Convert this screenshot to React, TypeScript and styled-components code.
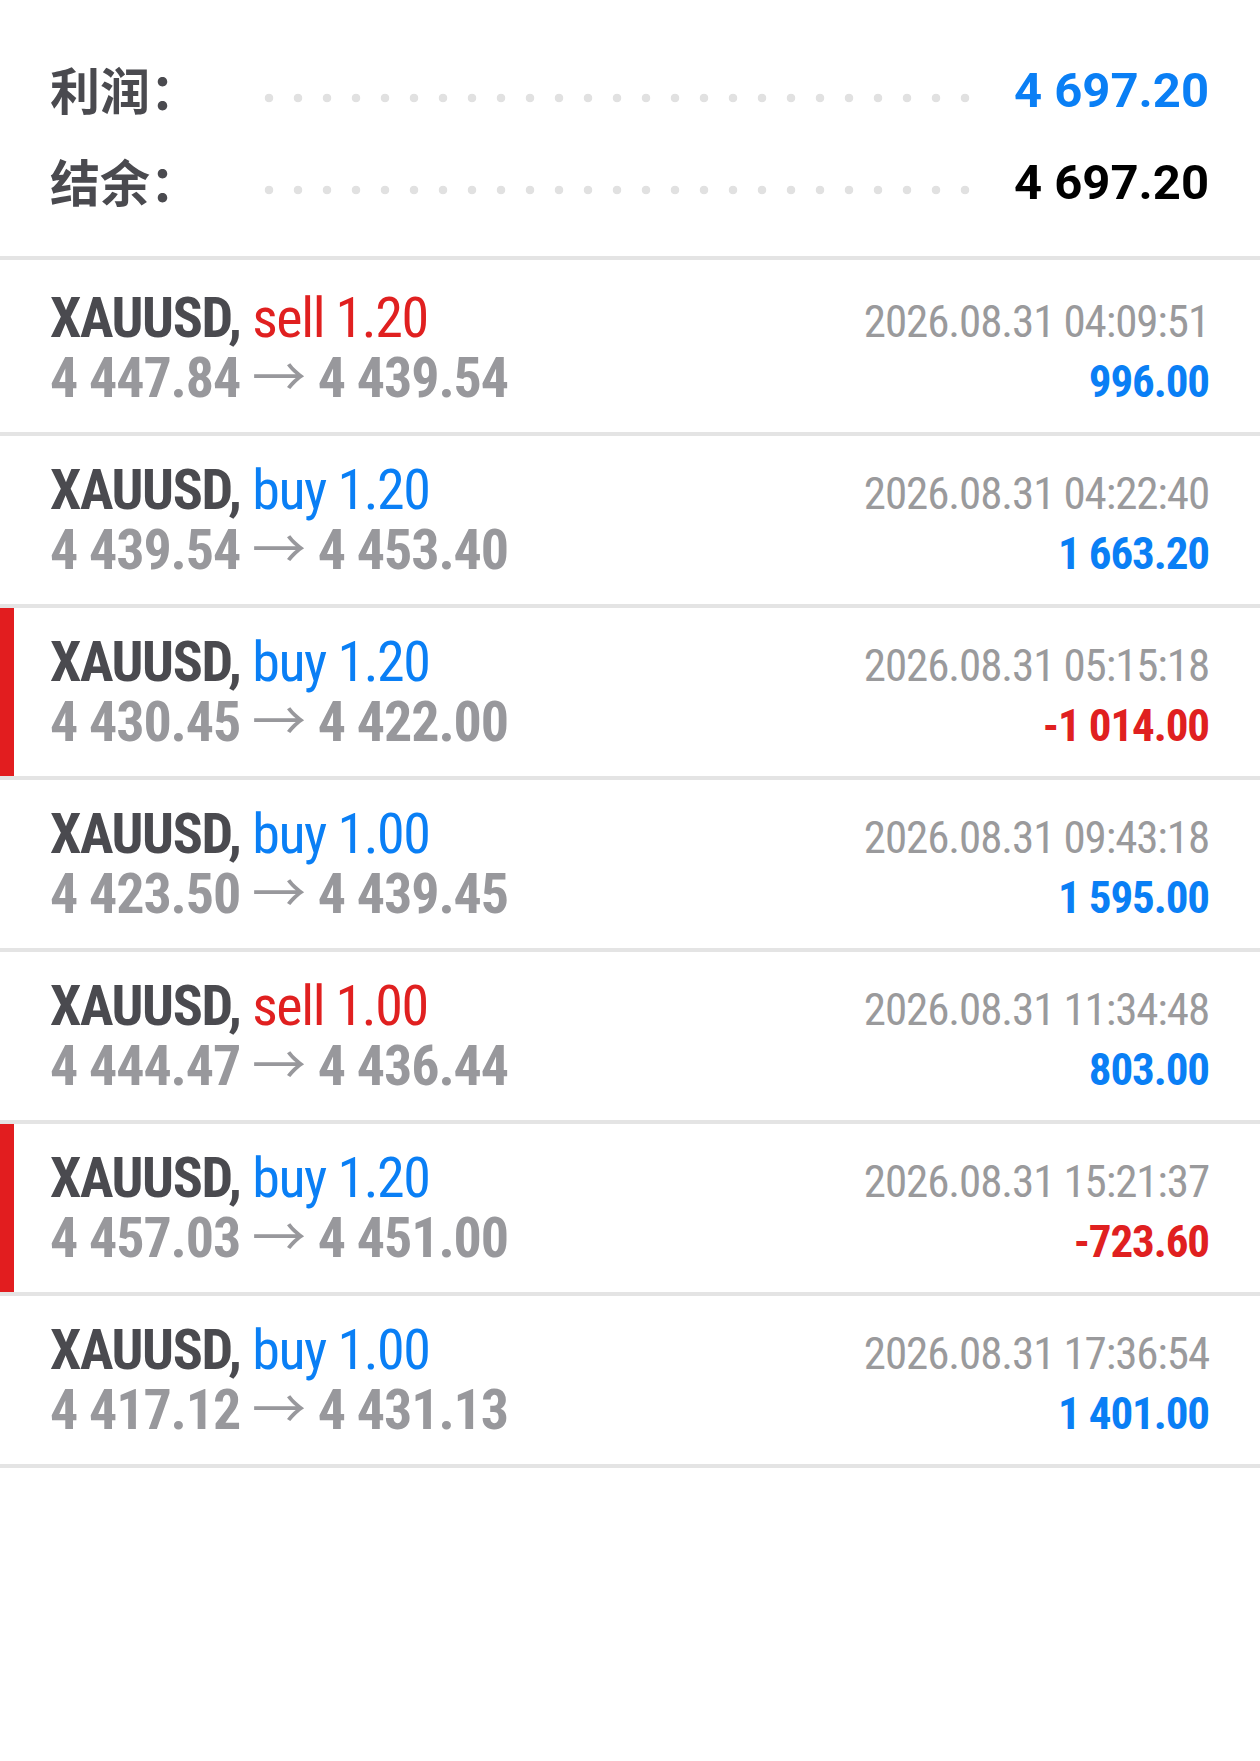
import React from 'react';
import styled, { createGlobalStyle } from 'styled-components';

const GlobalStyle = createGlobalStyle`
  html, body {
    margin: 0;
    padding: 0;
    background: #fff;
  }
  body {
    font-family: Roboto, 'Noto Sans CJK SC', sans-serif;
  }
`;

const Page = styled.div`
  width: 1260px;
  min-height: 1761px;
  background: #fff;
`;

const Summary = styled.div`
  padding: 44px 51px 28px 50px;
  border-bottom: 4px solid #e4e4e4;
`;

const SummaryRow = styled.div`
  display: flex;
  align-items: center;
  height: 92px;
`;

const SummaryLabel = styled.span`
  width: 205px;
  flex-shrink: 0;
  font-family: 'Noto Sans CJK SC', sans-serif;
  font-weight: 700;
  font-size: 50px;
  line-height: 1;
  color: #4a4a4f;
  margin-top: -4px;
`;

const Dots = styled.span`
  flex: 1;
  align-self: stretch;
  margin-right: 35px;
  background-image: radial-gradient(circle, #e1e1e1 4px, transparent 4.6px);
  background-size: 28px 10px;
  background-position: 0 49px;
  background-repeat: space no-repeat;
`;

const SummaryValue = styled.span<{ $color: string }>`
  font-family: Roboto, sans-serif;
  font-weight: 700;
  font-size: 49px;
  color: ${p => p.$color};
`;

const List = styled.div`
  padding-top: 4px;
`;

const Deal = styled.div<{ $flag?: boolean }>`
  padding: 24px 51px 24px 50px;
  border-bottom: 4px solid #e4e4e4;
  box-shadow: ${p => (p.$flag ? 'inset 14px 0 0 #e21d1f' : 'none')};
  font-family: 'Roboto Condensed', Roboto, sans-serif;
  font-stretch: condensed;
  letter-spacing: -1.1px;
`;

const Line = styled.div`
  display: flex;
  justify-content: space-between;
  align-items: baseline;
  height: 60px;
  line-height: 60px;
  white-space: nowrap;
`;

const Symbol = styled.span`
  font-size: 56px;
  font-weight: 700;
  color: #4a4a4f;
  letter-spacing: -1.4px;
`;

const Side = styled.span<{ $sell: boolean }>`
  font-weight: 400;
  color: ${p => (p.$sell ? '#e02020' : '#0a7ff5')};
`;

const Prices = styled.span`
  font-size: 56px;
  font-weight: 700;
  color: #98989c;
`;

const Arrow = styled.span`
  font-family: 'Noto Sans CJK SC', sans-serif;
  font-weight: 400;
  font-size: 54px;
  line-height: 0;
  letter-spacing: 0;
`;

const Time = styled.span`
  font-size: 45px;
  font-weight: 400;
  color: #9a9a9c;
`;

const Profit = styled.span<{ $loss: boolean }>`
  font-size: 45px;
  font-weight: 700;
  color: ${p => (p.$loss ? '#e02020' : '#0a7ff5')};
`;

type Trade = {
  side: 'buy' | 'sell';
  volume: string;
  open: string;
  close: string;
  time: string;
  profit: string;
  flag?: boolean;
};

const trades: Trade[] = [
  { side: 'sell', volume: '1.20', open: '4 447.84', close: '4 439.54', time: '2026.08.31 04:09:51', profit: '996.00' },
  { side: 'buy', volume: '1.20', open: '4 439.54', close: '4 453.40', time: '2026.08.31 04:22:40', profit: '1 663.20' },
  { side: 'buy', volume: '1.20', open: '4 430.45', close: '4 422.00', time: '2026.08.31 05:15:18', profit: '-1 014.00', flag: true },
  { side: 'buy', volume: '1.00', open: '4 423.50', close: '4 439.45', time: '2026.08.31 09:43:18', profit: '1 595.00' },
  { side: 'sell', volume: '1.00', open: '4 444.47', close: '4 436.44', time: '2026.08.31 11:34:48', profit: '803.00' },
  { side: 'buy', volume: '1.20', open: '4 457.03', close: '4 451.00', time: '2026.08.31 15:21:37', profit: '-723.60', flag: true },
  { side: 'buy', volume: '1.00', open: '4 417.12', close: '4 431.13', time: '2026.08.31 17:36:54', profit: '1 401.00' },
];

const App = () => (
  <Page>
    <GlobalStyle />
    <Summary>
      <SummaryRow>
        <SummaryLabel>利润：</SummaryLabel>
        <Dots />
        <SummaryValue $color="#0a7ff5">4 697.20</SummaryValue>
      </SummaryRow>
      <SummaryRow>
        <SummaryLabel>结余：</SummaryLabel>
        <Dots />
        <SummaryValue $color="#000">4 697.20</SummaryValue>
      </SummaryRow>
    </Summary>
    <List>
      {trades.map((t, i) => (
        <Deal key={i} $flag={t.flag}>
          <Line>
            <Symbol>
              XAUUSD, <Side $sell={t.side === 'sell'}>{t.side} {t.volume}</Side>
            </Symbol>
            <Time>{t.time}</Time>
          </Line>
          <Line>
            <Prices>
              {t.open} <Arrow>→</Arrow> {t.close}
            </Prices>
            <Profit $loss={t.profit.startsWith('-')}>{t.profit}</Profit>
          </Line>
        </Deal>
      ))}
    </List>
  </Page>
);

export default App;
